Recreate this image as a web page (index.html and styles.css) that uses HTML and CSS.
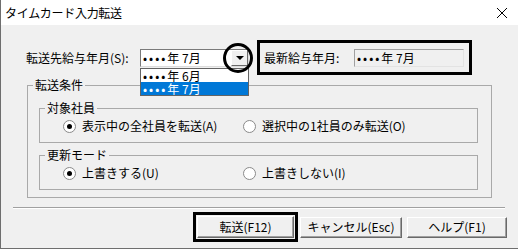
FILE: index.html
```html
<!DOCTYPE html>
<html lang="ja">
<head>
    <meta charset="utf-8">
    <title>タイムカード入力転送</title>
    <link rel="stylesheet" href="styles.css">
</head>
<body>
<div class="window">
    <!-- barra de título -->
    <div class="titlebar">
        <span class="title">タイムカード入力転送</span>
        <svg class="close" width="12" height="12" viewBox="0 0 12 12">
            <path d="M1 1 L11 11 M11 1 L1 11" stroke="#000" stroke-width="1" fill="none"/>
        </svg>
    </div>

    <div class="content">
        <div class="top-row">
            <label class="lbl-target">転送先給与年月(S):</label>
            <div class="combo">
                <span class="combo-text"><span class="dots">••••</span>年 7月</span>
                <span class="combo-btn"><span class="arrow"></span></span>
            </div>
            <div class="mark-box">
                <span class="lbl-latest">最新給与年月:</span>
                <div class="readonly"><span class="dots">••••</span>年 7月</div>
            </div>
            <!-- lista desplegable abierta y círculo de marca, van encima -->
            <div class="droplist">
                <div class="item"><span class="dots">••••</span>年 6月</div>
                <div class="item selected"><span class="dots">••••</span>年 7月</div>
            </div>
            <div class="mark-circle"></div>
        </div>

        <fieldset class="group outer">
            <legend>転送条件</legend>
            <fieldset class="group inner">
                <legend>対象社員</legend>
                <div class="radios">
                    <label class="radio checked"><span class="dot"></span>表示中の全社員を転送(A)</label>
                    <label class="radio"><span class="dot"></span>選択中の1社員のみ転送(O)</label>
                </div>
            </fieldset>
            <fieldset class="group inner second">
                <legend>更新モード</legend>
                <div class="radios">
                    <label class="radio checked"><span class="dot"></span>上書きする(U)</label>
                    <label class="radio"><span class="dot"></span>上書きしない(I)</label>
                </div>
            </fieldset>
        </fieldset>

        <div class="separator"></div>

        <div class="buttons">
            <div class="focus-box"><button class="btn main">転送(F12)</button></div>
            <button class="btn">キャンセル(Esc)</button>
            <button class="btn help">ヘルプ(F1)</button>
        </div>
    </div>
</div>
</body>
</html>
```

FILE: styles.css
```css
* {
    box-sizing: border-box;
}

body {
    margin: 0;
    font-family: "Noto Sans CJK JP", "Liberation Sans", sans-serif;
    font-size: 12px;
    color: #000;
    background: #f0f0f0;
}

.window {
    width: 518px;
    height: 249px;
    border-left: 1px solid #6e6e6e;
    border-bottom: 1px solid #6e6e6e;
    background: #f0f0f0;
    position: relative;
}

.titlebar {
    height: 25px;
    background: #fff;
    display: flex;
    align-items: center;
    justify-content: space-between;
    padding: 0 10px 0 4px;
}

.title {
    font-size: 12px;
    line-height: 14px;
    letter-spacing: -0.3px;
}

.content {
    position: relative;
    padding-top: 15px;
}

.top-row {
    display: flex;
    align-items: center;
    height: 35px;
    padding-left: 25px;
}

.dots {
    letter-spacing: 2px;
}

.lbl-target {
    width: 114px;
    line-height: 14px;
}

.combo {
    width: 109px;
    height: 18px;
    background: #fff;
    border: 1px solid #7a7a7a;
    border-right-color: #dcdcdc;
    border-bottom-color: #dcdcdc;
    display: flex;
    align-items: center;
    justify-content: space-between;
    padding-left: 2px;
}

.combo-text {
    line-height: 14px;
}

.combo-btn {
    width: 17px;
    height: 16px;
    background: #f0f0f0;
    border: 1px solid #fff;
    border-right-color: #696969;
    border-bottom-color: #696969;
    display: flex;
    align-items: center;
    justify-content: center;
}

.arrow {
    width: 0;
    height: 0;
    border-left: 4px solid transparent;
    border-right: 4px solid transparent;
    border-top: 4px solid #000;
}

.mark-box {
    margin-left: 8px;
    width: 215px;
    height: 35px;
    border: 3px solid #000;
    display: flex;
    align-items: center;
    justify-content: space-between;
    padding: 0 5px 0 4px;
}

.lbl-latest {
    line-height: 14px;
}

.readonly {
    width: 110px;
    height: 18px;
    border: 1px solid #a0a0a0;
    border-right-color: #e3e3e3;
    border-bottom-color: #e3e3e3;
    padding-left: 2px;
    line-height: 16px;
}

.droplist {
    position: absolute;
    left: 139px;
    top: 43px;
    width: 109px;
    height: 28px;
    background: #fff;
    border: 1px solid #646464;
}

.item {
    height: 13px;
    line-height: 13px;
    padding-left: 2px;
}

.item.selected {
    background: #0078d7;
    color: #fff;
}

.mark-circle {
    position: absolute;
    left: 222px;
    top: 18px;
    width: 30px;
    height: 30px;
    border: 3px solid #000;
    border-radius: 50%;
}

fieldset.group {
    margin: 0;
    border: 1px solid #a9a9a9;
    min-width: 0;
}

fieldset.group legend {
    padding: 0 2px;
    line-height: 14px;
}

.outer {
    width: 465px;
    margin: 3px 0 0 26px !important;
    padding: 9px 13px 7px 11px;
}

.outer > legend {
    margin-left: -6px;
}

.inner {
    padding: 4px 0 9px 0;
}

.inner > legend {
    margin-left: 5px;
}

.inner.second {
    margin-top: 5px !important;
}

.radios {
    display: flex;
    padding-left: 23px;
    height: 14px;
    align-items: center;
}

.radio {
    display: flex;
    align-items: center;
    line-height: 14px;
    width: 180px;
}

.dot {
    width: 13px;
    height: 13px;
    border-radius: 50%;
    background: #fff;
    border: 1px solid #8a8a8a;
    margin-right: 6px;
    position: relative;
}

.radio.checked .dot::after {
    content: "";
    position: absolute;
    left: 3px;
    top: 3px;
    width: 5px;
    height: 5px;
    border-radius: 50%;
    background: #000;
}

.separator {
    margin: 9px 0 0 12px;
    width: 492px;
    border-top: 1px solid #a0a0a0;
    border-bottom: 1px solid #fff;
}

.buttons {
    display: flex;
    justify-content: flex-end;
    align-items: center;
    padding-right: 11px;
    margin-top: 3px;
}

.focus-box {
    border: 3px solid #000;
    width: 105px;
    height: 30px;
    display: flex;
    align-items: center;
    justify-content: center;
    margin-right: 2px;
}

.btn {
    font-family: "Noto Sans CJK JP", "Liberation Sans", sans-serif;
    font-size: 12px;
    height: 21px;
    width: 102px;
    background: #f0f0f0;
    border: 1px solid #fff;
    border-right-color: #696969;
    border-bottom-color: #696969;
    box-shadow: inset -1px -1px 0 #a0a0a0;
    padding: 0;
    line-height: 14px;
    color: #000;
}

.btn.main {
    width: 97px;
    height: 22px;
}

.btn.help {
    margin-left: 5px;
    width: 100px;
}
```
